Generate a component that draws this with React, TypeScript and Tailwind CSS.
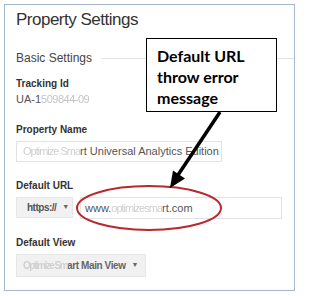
import React from 'react';

const label = 'text-[10px] leading-[14px] font-bold text-[#333]';

export default function App() {
  return (
    <div className="relative w-[300px] h-[296px] bg-white font-['Liberation_Sans',Arial,sans-serif] overflow-hidden">
      {/* Settings panel */}
      <div className="absolute left-[4px] top-[4px] w-[291px] h-[287px] border border-[#a3b8cf] pl-[11px] pt-[5px]">
        <div className="text-[17px] leading-[20px] text-[#333] tracking-[-0.5px]">Property Settings</div>

        <div className="mt-[20px] flex items-center gap-[9px]">
          <span className="text-[12px] leading-[16px] text-[#444]">Basic Settings</span>
          <div className="flex-1 h-px bg-[#e3e3e3]" />
        </div>

        <div className={`mt-[11px] ${label}`}>Tracking Id</div>
        <div className="mt-[1px] text-[11px] leading-[14px] text-[#555] whitespace-nowrap">
          UA-1<span className="text-[#c4c4c4] blur-[0.4px] tracking-[-0.5px]">509844-09</span>
        </div>

        <div className={`mt-[17px] ${label}`}>Property Name</div>
        <div className="mt-[4px] w-[206px] h-[21px] border border-[#e2e2e2] px-[6px] flex items-center overflow-hidden whitespace-nowrap text-[11px] text-[#555]">
          <span className="text-[#cfcfcf] blur-[0.5px] tracking-[-1px]">Optimize Sma</span>
          <span>rt Universal Analytics Edition</span>
        </div>

        <div className={`mt-[17px] ${label}`}>Default URL</div>
        <div className="mt-[4px] flex gap-[7px]">
          <div className="w-[57px] h-[21px] bg-[#f1f1f1] border border-[#e6e6e6] flex items-center pl-[10px] whitespace-nowrap text-[10px] font-bold tracking-[-0.5px] text-[#555]">
            https://<span className="ml-[6px] text-[7px] text-[#666]">▼</span>
          </div>
          <div className="w-[202px] h-[22px] border border-[#e2e2e2] flex items-center pl-[4px] whitespace-nowrap text-[11px] text-[#555]">
            www.<span className="text-[#cfcfcf] blur-[0.5px] tracking-[-1px]">optimizesma</span>rt.com
          </div>
        </div>

        <div className={`mt-[17px] ${label}`}>Default View</div>
        <div className="mt-[4px] w-[130px] h-[23px] bg-[#f1f1f1] border border-[#e6e6e6] flex items-center pl-[6px] whitespace-nowrap text-[10px] font-bold tracking-[-0.4px] text-[#666]">
          <span className="text-[#d0d0d0] blur-[0.5px] tracking-[-1.5px]">Optimize Sm</span>art Main View
          <span className="ml-[6px] text-[7px] text-[#666]">▼</span>
        </div>
      </div>

      {/* Callout */}
      <div className="absolute left-[146px] top-[38px] w-[131px] h-[74px] bg-white border-[1.5px] border-black pl-[10px] pt-[6px] font-['Lato',sans-serif] font-bold text-[16px] leading-[21px] text-black">
        <div>Default URL</div>
        <div>throw error</div>
        <div>message</div>
      </div>

      {/* Arrow + highlight ellipse */}
      <svg className="absolute left-0 top-0 pointer-events-none" width="300" height="296" viewBox="0 0 300 296">
        <ellipse cx="149" cy="208" rx="72" ry="22" fill="none" stroke="#b8282d" strokeWidth="2" />
        <line x1="220" y1="112" x2="178" y2="175" stroke="#000" strokeWidth="3.5" />
        <polygon points="170,188 185,178.5 173,170.5" fill="#000" />
      </svg>
    </div>
  );
}
